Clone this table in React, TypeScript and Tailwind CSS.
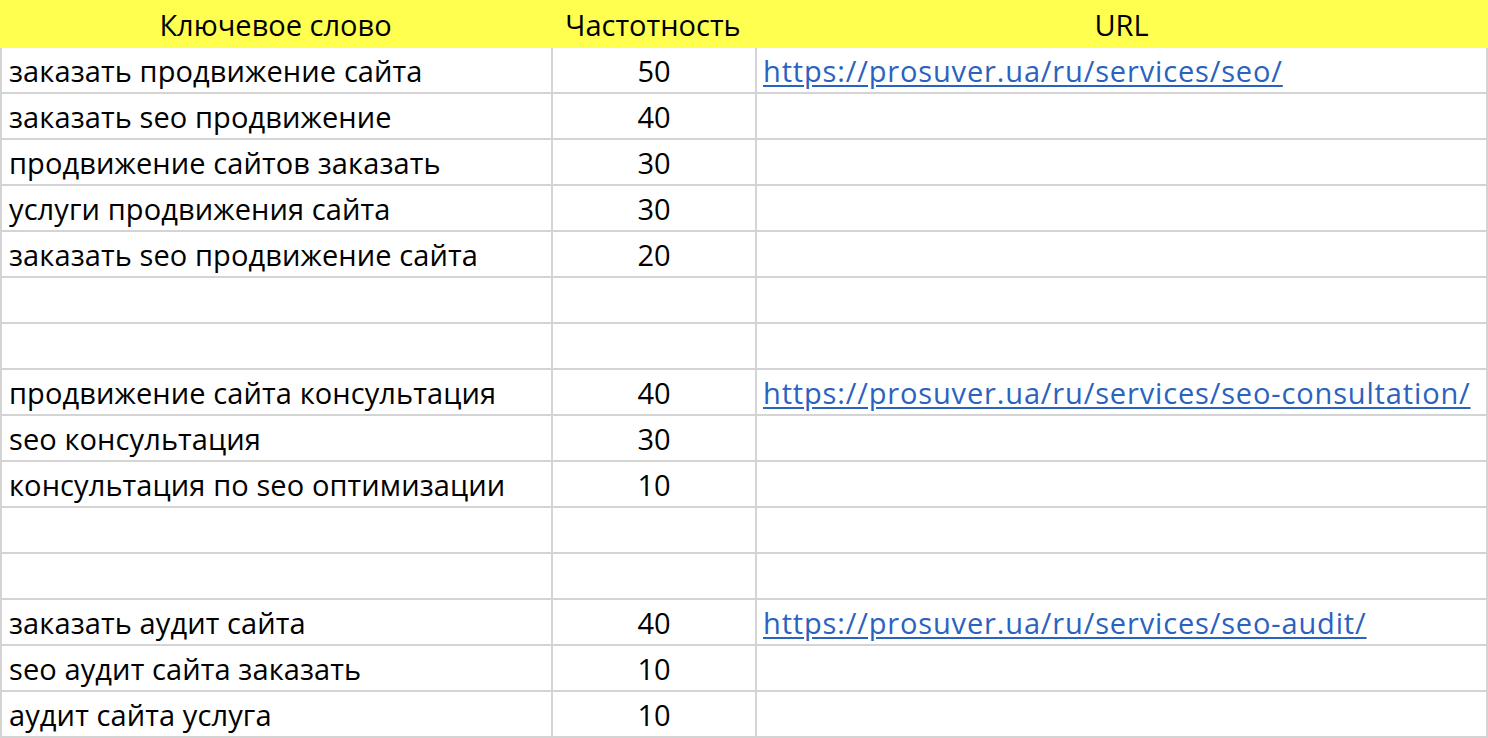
const rows: [string, string, string][] = [
  ["заказать продвижение сайта", "50", "https://prosuver.ua/ru/services/seo/"],
  ["заказать seo продвижение", "40", ""],
  ["продвижение сайтов заказать", "30", ""],
  ["услуги продвижения сайта", "30", ""],
  ["заказать seo продвижение сайта", "20", ""],
  ["", "", ""],
  ["", "", ""],
  ["продвижение сайта консультация", "40", "https://prosuver.ua/ru/services/seo-consultation/"],
  ["seo консультация", "30", ""],
  ["консультация по seo оптимизации", "10", ""],
  ["", "", ""],
  ["", "", ""],
  ["заказать аудит сайта", "40", "https://prosuver.ua/ru/services/seo-audit/"],
  ["seo аудит сайта заказать", "10", ""],
  ["аудит сайта услуга", "10", ""],
];

export default function App() {
  return (
    <div className="w-[1488px] h-[738px] overflow-hidden bg-white text-black font-['Open_Sans',sans-serif] text-[29px]">
      <div className="grid grid-cols-[551px_204px_733px] h-[48px] bg-[#ffff4f] items-center leading-none">
        <div className="text-center">Ключевое слово</div>
        <div className="text-center">Частотность</div>
        <div className="text-center">URL</div>
      </div>
      <div className="border-l-2 border-r-2 border-[#d4d4d4]">
        {rows.map((r, i) => (
          <div key={i} className="grid grid-cols-[549px_204px_731px] h-[46px] border-b-2 border-[#d4d4d4] leading-none">
            <div className="flex items-center px-[7px] whitespace-nowrap tracking-[0.1px]">{r[0]}</div>
            <div className="flex items-center justify-center border-l-2 border-[#d4d4d4]">{r[1]}</div>
            <div className="flex items-center px-[6px] border-l-2 border-[#d4d4d4] whitespace-nowrap">
              {r[2] && (
                <a href="#" className="text-[#2a62c0] underline underline-offset-[3px] tracking-[0.85px]">
                  {r[2]}
                </a>
              )}
            </div>
          </div>
        ))}
      </div>
    </div>
  );
}
